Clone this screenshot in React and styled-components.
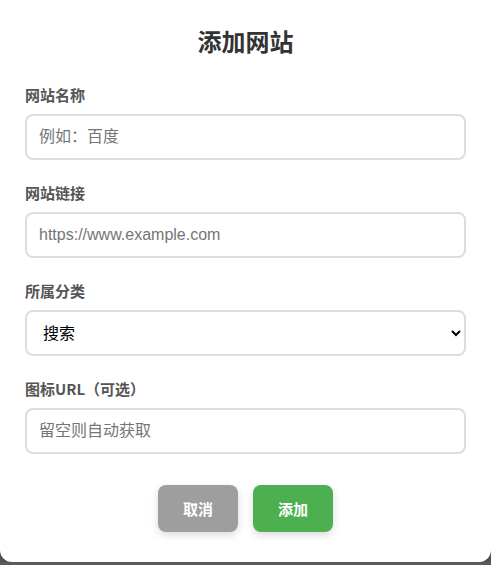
import React from "react";
import styled, { createGlobalStyle } from "styled-components";

const GlobalStyle = createGlobalStyle`
  html, body {
    margin: 0;
    padding: 0;
    background: #5a5a5a;
    font-family: "Noto Sans CJK SC", "Liberation Sans", sans-serif;
  }
  * {
    box-sizing: border-box;
  }
`;

const fields = [
  { label: "网站名称", placeholder: "例如：百度" },
  { label: "网站链接", placeholder: "https://www.example.com" },
];

const App = () => {
  return (
    <>
      <GlobalStyle />
      <Modal>
        <Title>添加网站</Title>
        {fields.map((f) => (
          <Group key={f.label}>
            <Label>{f.label}</Label>
            <Input placeholder={f.placeholder} />
          </Group>
        ))}
        <Group>
          <Label>所属分类</Label>
          <Select defaultValue="search">
            <option value="search">搜索</option>
            <option value="social">社交</option>
            <option value="video">视频</option>
          </Select>
        </Group>
        <Group>
          <Label>图标URL（可选）</Label>
          <Input placeholder="留空则自动获取" />
        </Group>
        <Actions>
          <Button $variant="cancel">取消</Button>
          <Button $variant="primary">添加</Button>
        </Actions>
      </Modal>
    </>
  );
};

export default App;

const Modal = styled.div`
  display: flex;
  flex-direction: column;
  width: 100%;
  height: 562px;
  background: #fff;
  border-radius: 0 0 12px 12px;
  padding: 24px 25px 30px;
  box-shadow: 0 4px 20px rgba(0, 0, 0, 0.25);
`;

const Title = styled.h2`
  margin: 0 0 26px;
  font-size: 24px;
  line-height: 34px;
  font-weight: bold;
  color: #333;
  text-align: center;
`;

const Group = styled.div`
  display: flex;
  flex-direction: column;
  margin-bottom: 22px;
`;

const Label = styled.label`
  font-size: 15px;
  line-height: 22px;
  font-weight: bold;
  color: #555;
  margin-bottom: 8px;
`;

const fieldBase = `
  width: 100%;
  height: 46px;
  border: 2px solid #ddd;
  border-radius: 8px;
  padding: 0 12px;
  font-size: 16px;
  background: #fff;
  outline: none;
`;

const Input = styled.input`
  ${fieldBase}
  font-family: "Liberation Sans", "Noto Sans CJK SC", sans-serif;
  color: #333;

  &::placeholder {
    color: #757575;
  }
`;

const Select = styled.select`
  ${fieldBase}
  font-family: "Liberation Sans", "Noto Sans CJK SC", sans-serif;
  color: #000;
`;

const Actions = styled.div`
  display: flex;
  justify-content: center;
  gap: 15px;
  margin-top: 9px;
`;

const Button = styled.button`
  width: 80px;
  height: 47px;
  border: none;
  border-radius: 8px;
  font-family: "Noto Sans CJK SC", sans-serif;
  font-size: 15px;
  font-weight: bold;
  color: #fff;
  background: ${(p) => (p.$variant === "primary" ? "#4caf50" : "#9e9e9e")};
  box-shadow: 0 3px 8px rgba(0, 0, 0, 0.15);
  cursor: pointer;
`;
